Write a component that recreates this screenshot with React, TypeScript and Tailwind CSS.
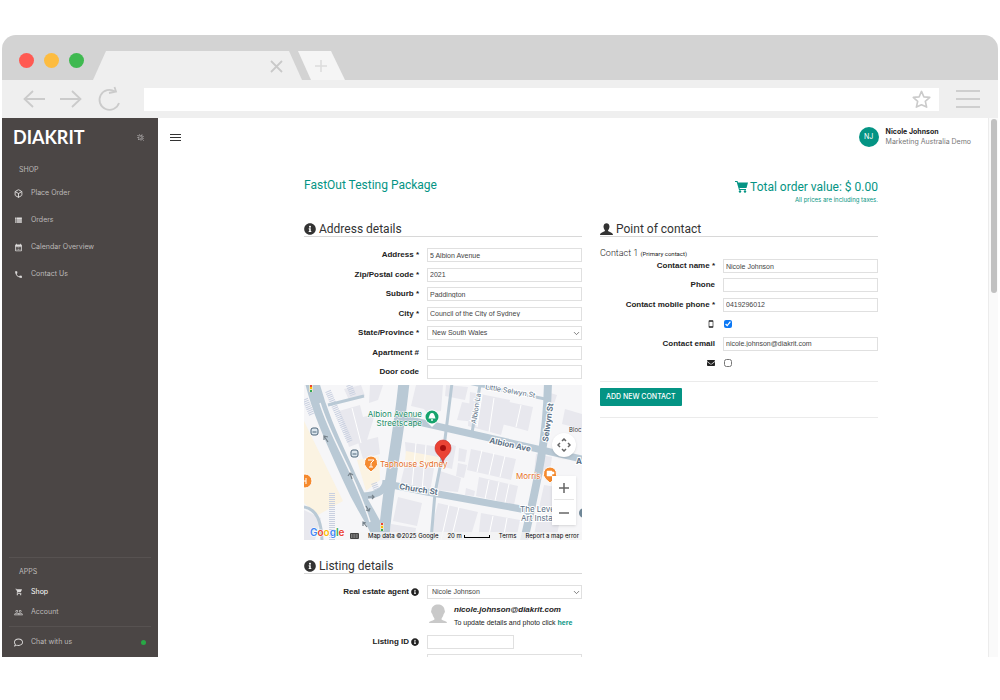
import type { ReactNode } from "react";
import {
  MdCalendarMonth,
  MdPeopleOutline,
  MdPhone,
  MdShoppingCart,
  MdSmartphone,
  MdViewList,
} from "react-icons/md";
import { FaEnvelope, FaInfoCircle, FaRegComment } from "react-icons/fa";
import { Box, ChevronDown } from "lucide-react";

const inputClass =
  "h-[14px] w-full min-w-0 border border-[#e0e0e0] bg-white px-[2px] text-[7px] leading-[12px] text-[#444] focus:border-[#049484] focus:outline-none";

const headingClass =
  "flex items-center gap-[3px] border-b border-[#d8d8d8] font-[Roboto,sans-serif] text-[12px] leading-[14px] text-[#333]";

function Row({
  id,
  label,
  info,
  children,
}: {
  id: string;
  label: ReactNode;
  info?: boolean;
  children: ReactNode;
}) {
  return (
    <div className="flex h-[14px] items-center gap-2">
      <label
        htmlFor={id}
        className="flex w-[115px] shrink-0 items-center justify-end gap-[2px] whitespace-nowrap text-[8px] font-bold leading-[14px] text-[#222]"
      >
        {label}
        {info ? <FaInfoCircle size={8} /> : null}
      </label>
      <div className="flex min-w-0 flex-1 items-center">{children}</div>
    </div>
  );
}

function TextRow({ id, label, value = "" }: { id: string; label: string; value?: string }) {
  return (
    <Row id={id} label={label}>
      <input id={id} type="text" defaultValue={value} className={inputClass} />
    </Row>
  );
}

function SelectBox({ id, value }: { id: string; value: string }) {
  return (
    <div className="relative w-full">
      <select
        id={id}
        defaultValue={value}
        className="block h-[14px] w-full appearance-none border border-[#e0e0e0] bg-white pl-1 text-[7px] leading-[12px] text-[#444]"
      >
        <option>{value}</option>
      </select>
      <ChevronDown
        size={9}
        strokeWidth={2}
        className="pointer-events-none absolute top-[3px] right-px text-[#555]"
      />
    </div>
  );
}

function BrowserChrome() {
  return (
    <header className="shrink-0">
      <div className="flex h-[45px] items-end rounded-t-[14px] bg-[#d3d3d3]">
        <div className="flex gap-[10px] self-center pt-[5px] pl-[17px]">
          <span className="size-[15px] rounded-full bg-[#ff5a52]" />
          <span className="size-[15px] rounded-full bg-[#fdbc40]" />
          <span className="size-[15px] rounded-full bg-[#3fb950]" />
        </div>
        <svg width="252" height="29" viewBox="0 0 252 29" className="ml-[9px] shrink-0">
          <path d="M0 29 13 0H196L209 29Z" fill="#efefef" />
          <path d="M205 0H238L252 29H218Z" fill="#f5f5f5" />
          <path d="m178 10 11 11m0-11-11 11" stroke="#c9c9c9" strokeWidth="1.8" />
          <path d="M222 15H234M228 9V21" stroke="#dcdcdc" strokeWidth="1.5" />
        </svg>
      </div>
      <div className="flex h-[38px] items-center bg-[#efefef]">
        <svg
          width="98"
          height="26"
          viewBox="0 0 98 26"
          className="ml-[21px] shrink-0"
          fill="none"
          stroke="#cbcbcb"
          strokeWidth="1.8"
        >
          <path d="M22 13H1.500M10 5 1.500 13l8.500 8M37 13H57.500M49 5l8.500 8-8.500 8" />
          <path d="M96 17A10 10 0 1 1 92 5.500M86 7l7-1.500L91.500 1" />
        </svg>
        <div className="ml-[23px] flex h-[23px] min-w-0 flex-1 items-center justify-end bg-white pr-[8px]">
          <svg
            width="19"
            height="19"
            viewBox="0 0 20 20"
            fill="none"
            stroke="#cbcbcb"
            strokeWidth="1.7"
            strokeLinejoin="round"
          >
            <path d="m10 1.500 2.500 5.700 6.200.6-4.700 4.100 1.400 6.100L10 15.500 4.600 18 6 11.900 1.300 7.800l6.200-.6Z" />
          </svg>
        </div>
        <div className="mr-[18px] ml-[17px] flex w-[24px] flex-col gap-[6px]">
          <span className="h-[2px] bg-[#cfcfcf]" />
          <span className="h-[2px] bg-[#cfcfcf]" />
          <span className="h-[2px] bg-[#cfcfcf]" />
        </div>
      </div>
    </header>
  );
}

function NavLink({ icon, label, active }: { icon: ReactNode; label: string; active?: boolean }) {
  return (
    <a
      href="#"
      className={`flex items-center gap-2 text-[7px] leading-[10px] ${active ? "text-white" : "text-[#bdbab9]"}`}
    >
      <span className="flex w-[9px] justify-center text-[#dedcdb]">{icon}</span>
      {label}
    </a>
  );
}

function Sidebar() {
  return (
    <aside className="flex w-[156px] shrink-0 flex-col bg-[#4b4645] font-[Inter,sans-serif]">
      <div className="flex items-center justify-between pt-[8px] pr-[14px] pl-[11px]">
        <span className="font-[Lato,sans-serif] text-[18px] font-bold leading-[22px] text-white">
          DIAKRIT
        </span>
        <svg width="7" height="7" viewBox="0 0 14 14" fill="none" stroke="#d8d6d5" strokeWidth="1.5">
          <path d="M1 2l3 3M5 1l2 4M10 1l-1 4M1 7l4 1M13 4 5 12M13 8l-5 5M2 11l2-1M12 12l1 1" />
        </svg>
      </div>
      <p className="mt-[17px] pl-[17px] text-[7px] leading-[10px] text-[#bdbab9]">SHOP</p>
      <nav className="mt-[13px] flex flex-col gap-[17px] pl-[12px]">
        <NavLink icon={<Box size={9} strokeWidth={2.5} />} label="Place Order" />
        <NavLink icon={<MdViewList size={10} />} label="Orders" />
        <NavLink icon={<MdCalendarMonth size={9} />} label="Calendar Overview" />
        <NavLink icon={<MdPhone size={9} />} label="Contact Us" />
      </nav>
      <div className="mx-[7px] mt-auto border-t border-[#575251]" />
      <p className="mt-[9px] pl-[17px] text-[7px] leading-[10px] text-[#bdbab9]">APPS</p>
      <nav className="mt-[10px] flex flex-col gap-[10px] pl-[12px]">
        <NavLink icon={<MdShoppingCart size={8} />} label="Shop" active />
        <NavLink icon={<MdPeopleOutline size={9} />} label="Account" />
      </nav>
      <div className="mx-[7px] mt-[9px] border-t border-[#575251]" />
      <div className="flex items-center justify-between py-[10px] pr-[12px] pl-[12px]">
        <NavLink icon={<FaRegComment size={9} />} label="Chat with us" />
        <span className="size-[5px] rounded-full bg-[#28a745]" />
      </div>
    </aside>
  );
}

function MapView() {
  return (
    <div className="relative mt-[6px] h-[155px] overflow-hidden bg-[#f6f6f8]">
      <svg
        width="100%"
        height="155"
        viewBox="0 0 278 155"
        preserveAspectRatio="xMidYMid slice"
        fontFamily="Inter, sans-serif"
      >
        <rect width="278" height="155" fill="#f6f6f8" />
        <path d="M0 36 39 116 14 130 0 118ZM53 75l22-4 1 24-14 11Z" fill="#fbf3e2" />
        <g fill="#e8e8ee">
          <path d="M35 26l21-6 3 12 12-3-8 26-18 7ZM40 4 57 0l4 11-16 4ZM54 57l20-5 2 17-17 5ZM66 0h13l-5 15-9 3ZM112 0h27l-2 26-14 2-3-4-13-3Z" />
          <path d="M101 57l35 5-1 12-33-4ZM101 80l29 3-4 24-30-7ZM137 67l5-9 10 3-4 23-8-2ZM155 63l8 2-2 12-7-1ZM167 64l45 10-5 21-44-10ZM154 78l9 2-3 13-8-2ZM136 86l21 7-3 14-23-2ZM175 92l39 9-4 19-38-9ZM162 103l9 3-1 5-9-1Z" />
          <path d="M158 17l36 7-2 15-39-4ZM166 7l40 8-1 5-8 30-33-9ZM205 17l24 5-5 24-26-7ZM142 0l22 2-3 13-20-4ZM94 112l24 6-5 23-24-5ZM87 139l25 4-2 14H84ZM134 118l40 9-9 30h-41ZM177 128l39 7-4 20h-38Z" />
          <path d="M243 7l10 3-4 12-8-2ZM261 24l17 5v15l-20-5ZM232 69l16 3-3 20-15-4ZM252 56l8 2-2 10-8-2ZM240 100l18 3-6 24-17-4ZM234 130l22 5-4 20h-23ZM0 125l17 8-6 22H0Z" />
        </g>
        <path d="M102 66l33 6-1 8-33-5Z" fill="#fbf3e2" />
        <g stroke="#fff" strokeWidth="1">
          <path d="m112 58-4 43M122 60l-4 46M178 65l-5 22M190 68l-5 22M201 71l-5 21M185 95l-4 19M195 97l-4 19M205 99l-4 19M145 120l-8 35M155 122l-8 33M178 10l-5 32M190 13l-5 34M48 23l9 35M217 20l-5 22M189 131l-5 24M203 133l-4 22" />
        </g>
        <g fill="none" stroke="#c9d0e0" strokeWidth="6" strokeDasharray="1 1">
          <path d="M1 14 8 30M24 6 46 57M28 108V155M70 98l5 13M45 0l4 10" />
        </g>
        <g fill="none" stroke="#b9c9d5">
          <path d="M8-3C17 32 31 60 46 94S65 125 80 160" strokeWidth="14" />
          <path d="M100-3C95 50 86 84 79 160" strokeWidth="11" />
          <path d="M82 95c0 10-8 15-22 16M83 99l40 8 94 17 12 3" strokeWidth="7" />
          <path d="M97 33 278 74" strokeWidth="7" />
          <path d="M244-3C243 53 234 95 219 160" strokeWidth="8" />
          <path d="M24 20 60 11M148-2 142 46 140 62 131 108 127 155M176 0l-8 48M164-2l82 17M0 122c14 2 18 17 18 36" strokeWidth="3" />
        </g>
        <path d="M16 18C28 57 49 84 66 137" fill="none" stroke="#f6f6f8" strokeWidth="1.5" />
        <g stroke="#76828b" strokeWidth="1.2" fill="none">
          <path d="m24 57-4-6m0 4v-4l4 1M48 94l-2-6m-2 3 2-3 3 2M64 112h6m-2-2 2 2-2 2M62 121l3 5m1-3-1 3-3-1M63 142l-4-5m0 4v-4l3 1" />
        </g>
        <g fontSize="8" fill="#168b65" stroke="#fff" strokeWidth="1" paintOrder="stroke" textAnchor="end">
          <text x="118" y="32">Albion Avenue</text>
          <text x="118" y="41">Streetscape</text>
        </g>
        <path d="M128 24.500a7.500 7.500 0 0 1 4 13.500l-4 4-4-4a7.500 7.500 0 0 1 4-13.500Z" fill="#fff" />
        <circle cx="128" cy="32" r="6.5" fill="#16a36d" />
        <path d="M128 28c-2 0-2.500 2-3.500 5.500h7C130.500 30 130 28 128 28Zm-.7 5h1.400v3h-1.400Z" fill="#fff" />
        <g fontSize="8" fill="#e56f1f" stroke="#fff" strokeWidth="1" paintOrder="stroke">
          <text x="76" y="82">Taphouse Sydney</text>
          <text x="212" y="94">Morris</text>
        </g>
        <g fill="#f58a2e" stroke="#fff">
          <path d="M67 71a7 7 0 0 1 4.500 12L67 87l-4.500-4A7 7 0 0 1 67 71Z" />
          <circle cx="1" cy="96" r="7" />
          <path d="M246 82a7 7 0 0 1 4.500 12l-4.500 4-4.500-4a7 7 0 0 1 4.500-12Z" />
        </g>
        <path d="M64 75h6l-3 3v4m-2 0h4M-1 93v6m3-6v6m-3-3h3" fill="none" stroke="#fff" />
        <path d="M243 86h5v5h-5Zm5 1h2v2h-2" fill="#fff" stroke="#fff" strokeWidth=".5" />
        <g fill="#dce6ee" stroke="#4b6479">
          <rect x="7" y="43" width="7" height="7" rx="2" />
          <rect x="47" y="65" width="7" height="7" rx="2" />
          <path d="M8.500 47h4M48.500 69h4" />
        </g>
        <g fill="#5c7186" stroke="#fff" strokeWidth="2" paintOrder="stroke" fontSize="8">
          <g fontWeight="bold">
            <text transform="rotate(9 95 104)" x="95" y="104">Church St</text>
            <text transform="rotate(12 185 58)" x="185" y="58">Albion Ave</text>
            <text transform="rotate(-82 244 57)" x="244" y="57">Selwyn St</text>
            <text x="272" y="79">A</text>
          </g>
          <text transform="rotate(10 181 4)" x="181" y="4" fontSize="7">Little Selwyn St</text>
          <text transform="rotate(-81 172 39)" x="172" y="39" fontSize="7">Albion La</text>
          <text x="216" y="127">The Leve</text>
          <text x="217" y="136">Art Insta</text>
        </g>
        <text x="265" y="47" fontSize="6" fill="#333">Bloc</text>
        <circle cx="280" cy="128" r="5" fill="#6f8797" />
        <path
          d="M139 78c-1-7-8-8-8-15a8 8 0 0 1 16 0c0 7-7 8-8 15Z"
          fill="#ea4335"
          stroke="#c5221f"
          strokeWidth=".5"
        />
        <circle cx="139" cy="63" r="3" fill="#a50e0e" />
        <g>
          <rect x="5" y="-1" width="4" height="8" fill="#e8e4c8" />
          <rect x="76" y="138" width="4" height="8" fill="#e8e4c8" />
          <path d="M6 1h2M77 139h2" stroke="#ea4335" strokeWidth="2" />
          <path d="M6 3h2M77 142h2" stroke="#fbbc05" strokeWidth="2" />
          <path d="M6 6h2M77 145h2" stroke="#34a853" strokeWidth="2" />
        </g>
        <text
          x="6"
          y="151"
          fontSize="10"
          fontWeight="600"
          stroke="#fff"
          strokeWidth="1"
          paintOrder="stroke"
        >
          <tspan fill="#4285f4">G</tspan>
          <tspan fill="#ea4335">o</tspan>
          <tspan fill="#fbbc05">o</tspan>
          <tspan fill="#4285f4">g</tspan>
          <tspan fill="#34a853">l</tspan>
          <tspan fill="#ea4335">e</tspan>
        </text>
      </svg>
      <div className="absolute right-0 bottom-0 left-[46px] flex h-[8px] items-center justify-between bg-[#f5f5f5]/80 pr-[3px] font-[Inter,sans-serif] text-[6px] leading-[8px] whitespace-nowrap text-black">
        <svg width="9" height="6" viewBox="0 0 9 6">
          <rect width="9" height="6" rx="1" fill="#444" />
          <path d="M1 2h7M1 4h7" stroke="#eee" strokeDasharray="1 .6" strokeWidth=".7" />
        </svg>
        <span>Map data ©2025 Google</span>
        <span className="flex items-center gap-[2px]">
          20 m
          <span className="h-[3px] w-[26px] border border-t-0 border-black" />
        </span>
        <a href="#">Terms</a>
        <a href="#">Report a map error</a>
      </div>
      <button
        type="button"
        aria-label="Map camera controls"
        className="absolute top-[48px] right-[6px] flex size-[24px] items-center justify-center rounded-full bg-white shadow-sm"
      >
        <svg width="14" height="14" viewBox="0 0 14 14" fill="none" stroke="#666" strokeWidth="1.5">
          <path d="m5 3 2-2 2 2M5 11l2 2 2-2M3 5 1 7l2 2M11 5l2 2-2 2" />
        </svg>
      </button>
      <div className="absolute right-[6px] bottom-[15px] flex w-[24px] flex-col bg-white px-[2px] shadow-sm">
        <button
          type="button"
          aria-label="Zoom in"
          className="flex h-[24px] items-center justify-center border-b border-[#e6e6e6]"
        >
          <svg width="10" height="10" viewBox="0 0 10 10" stroke="#666" strokeWidth="1.5">
            <path d="M0 5h10M5 0v10" />
          </svg>
        </button>
        <button type="button" aria-label="Zoom out" className="flex h-[25px] items-center justify-center">
          <svg width="10" height="10" viewBox="0 0 10 10" stroke="#666" strokeWidth="1.5">
            <path d="M0 5h10" />
          </svg>
        </button>
      </div>
    </div>
  );
}

function OrderDetails() {
  return (
    <section>
      <h2 className={headingClass}>
        <FaInfoCircle size={12} />
        Address details
      </h2>
      <div className="mt-[11px] flex h-[131px] flex-col justify-between">
        <TextRow id="address" label="Address *" value="5 Albion Avenue" />
        <TextRow id="zip" label="Zip/Postal code *" value="2021" />
        <TextRow id="suburb" label="Suburb *" value="Paddington" />
        <TextRow id="city" label="City *" value="Council of the City of Sydney" />
        <Row id="state" label="State/Province *">
          <SelectBox id="state" value="New South Wales" />
        </Row>
        <TextRow id="apartment" label="Apartment #" />
        <TextRow id="door" label="Door code" />
      </div>
      <MapView />

      <h2 className={`${headingClass} mt-[19px]`}>
        <FaInfoCircle size={12} />
        Listing details
      </h2>
      <div className="mt-[11px]">
        <Row id="agent" label="Real estate agent" info>
          <SelectBox id="agent" value="Nicole Johnson" />
        </Row>
        <div className="mt-[5px] flex gap-[7px] pl-[125px]">
          <svg width="18" height="20" viewBox="0 0 18 20" fill="#c9c9c9">
            <path d="M2.500 6C2.500-1.500 15.500-1.500 15.500 6c1 2 0 3-.8 4-.7 3-2.200 4-2.200 5 0 2 5.500 1.500 5.500 4H0c0-2.500 5.500-2 5.500-4 0-1-1.500-2-2.200-5-.8-1-1.800-2-.8-4Z" />
          </svg>
          <div className="whitespace-nowrap text-[#222]">
            <p className="text-[8px] font-bold italic leading-[12px]">nicole.johnson@diakrit.com</p>
            <p className="text-[7px] leading-[14px]">
              To update details and photo click{" "}
              <a href="#" className="font-bold text-[#049484]">
                here
              </a>
            </p>
          </div>
        </div>
        <div className="mt-[5px]">
          <Row id="listing-id" label="Listing ID" info>
            <div className="w-[87px]">
              <input id="listing-id" type="text" className={`${inputClass} block`} />
            </div>
          </Row>
        </div>
        <div className="mt-[5px]">
          <Row id="listing-title" label="">
            <input id="listing-title" type="text" aria-label="Listing title" className={inputClass} />
          </Row>
        </div>
      </div>
    </section>
  );
}

function ContactDetails() {
  return (
    <section>
      <h2 className={headingClass}>
        <svg width="13" height="12" viewBox="0 0 13 12" fill="currentColor">
          <path d="M3.500 3.500C3.500-1 9.500-1 9.500 3.500c0 2-1 3-1.500 4 0 1.500 5 1.500 5 4.500H0C0 9 5 9 5 7.500c-.5-1-1.500-2-1.500-4Z" />
        </svg>
        Point of contact
      </h2>
      <p className="mt-[11px] font-[Roboto,sans-serif] text-[9px] font-light leading-[10px] text-[#222]">
        Contact 1 <span className="text-[6px] font-normal">(Primary contact)</span>
      </p>
      <div className="flex h-[111px] flex-col justify-between">
        <TextRow id="contact-name" label="Contact name *" value="Nicole Johnson" />
        <TextRow id="phone" label="Phone" />
        <TextRow id="mobile" label="Contact mobile phone *" value="0419296012" />
        <Row id="sms" label={<MdSmartphone size={8} aria-label="Notify by text message" />}>
          <input id="sms" type="checkbox" defaultChecked className="ml-px size-[8px] accent-[#0b78f5]" />
        </Row>
        <TextRow id="email" label="Contact email" value="nicole.johnson@diakrit.com" />
        <Row id="mail" label={<FaEnvelope size={8} aria-label="Notify by email" />}>
          <input id="mail" type="checkbox" className="ml-px size-[8px]" />
        </Row>
      </div>
      <div className="mt-[11px] border-y border-[#ebebeb] pt-[6px] pb-[11px]">
        <button
          type="button"
          className="block h-[18px] rounded-[1px] bg-[#049484] px-[6px] font-[Inter,sans-serif] text-[7px] font-medium leading-[18px] text-white"
        >
          ADD NEW CONTACT
        </button>
      </div>
    </section>
  );
}

export default function App() {
  return (
    <div className="flex h-screen flex-col bg-white px-[2px] pt-[35px] pb-[43px] font-['Liberation_Sans',Arial,sans-serif]">
      <BrowserChrome />
      <div className="flex min-h-0 flex-1">
        <Sidebar />
        <main className="min-w-0 flex-1 overflow-hidden">
          <div className="flex items-center justify-between pt-[9px] pr-[17px] pl-[12px]">
            <button type="button" aria-label="Toggle menu" className="flex w-[11px] flex-col gap-[2px]">
              <span className="h-px bg-[#333]" />
              <span className="h-px bg-[#333]" />
              <span className="h-px bg-[#333]" />
            </button>
            <div className="flex items-center gap-[7px] font-[Inter,sans-serif] text-[7px] leading-[10px]">
              <span className="flex size-[20px] items-center justify-center rounded-full bg-[#049484] text-white">
                NJ
              </span>
              <div>
                <p className="font-bold text-[#222]">Nicole Johnson</p>
                <p className="text-[#777]">Marketing Australia Demo</p>
              </div>
            </div>
          </div>

          <div className="mr-[110px] ml-[146px]">
            <div className="flex items-start justify-between pt-[31px] font-[Roboto,sans-serif] text-[#049484]">
              <h1 className="text-[12px] leading-[14px]">FastOut Testing Package</h1>
              <div className="text-right">
                <p className="flex items-center gap-[2px] text-[12px] leading-[18px]">
                  <svg width="13" height="12" viewBox="0 0 13 12" fill="currentColor">
                    <path d="M0 0h2.500l.5 1.500h10L11.500 7H4.500l.3 1H11v1H4L1.700 1H0Z" />
                    <circle cx="5" cy="10.5" r="1.2" />
                    <circle cx="10" cy="10.5" r="1.2" />
                  </svg>
                  Total order value: $ 0.00
                </p>
                <p className="font-[Inter,sans-serif] text-[6px] leading-[8px]">
                  All prices are including taxes.
                </p>
              </div>
            </div>
            <div className="mt-[18px] grid grid-cols-2 gap-[18px]">
              <OrderDetails />
              <ContactDetails />
            </div>
          </div>
        </main>
        <div className="w-[10px] shrink-0 border-l border-[#ececec] bg-[#fafafa] pt-px pl-[2px]">
          <div className="h-[174px] w-[6px] rounded-full bg-[#c1c1c1]" />
        </div>
      </div>
    </div>
  );
}
